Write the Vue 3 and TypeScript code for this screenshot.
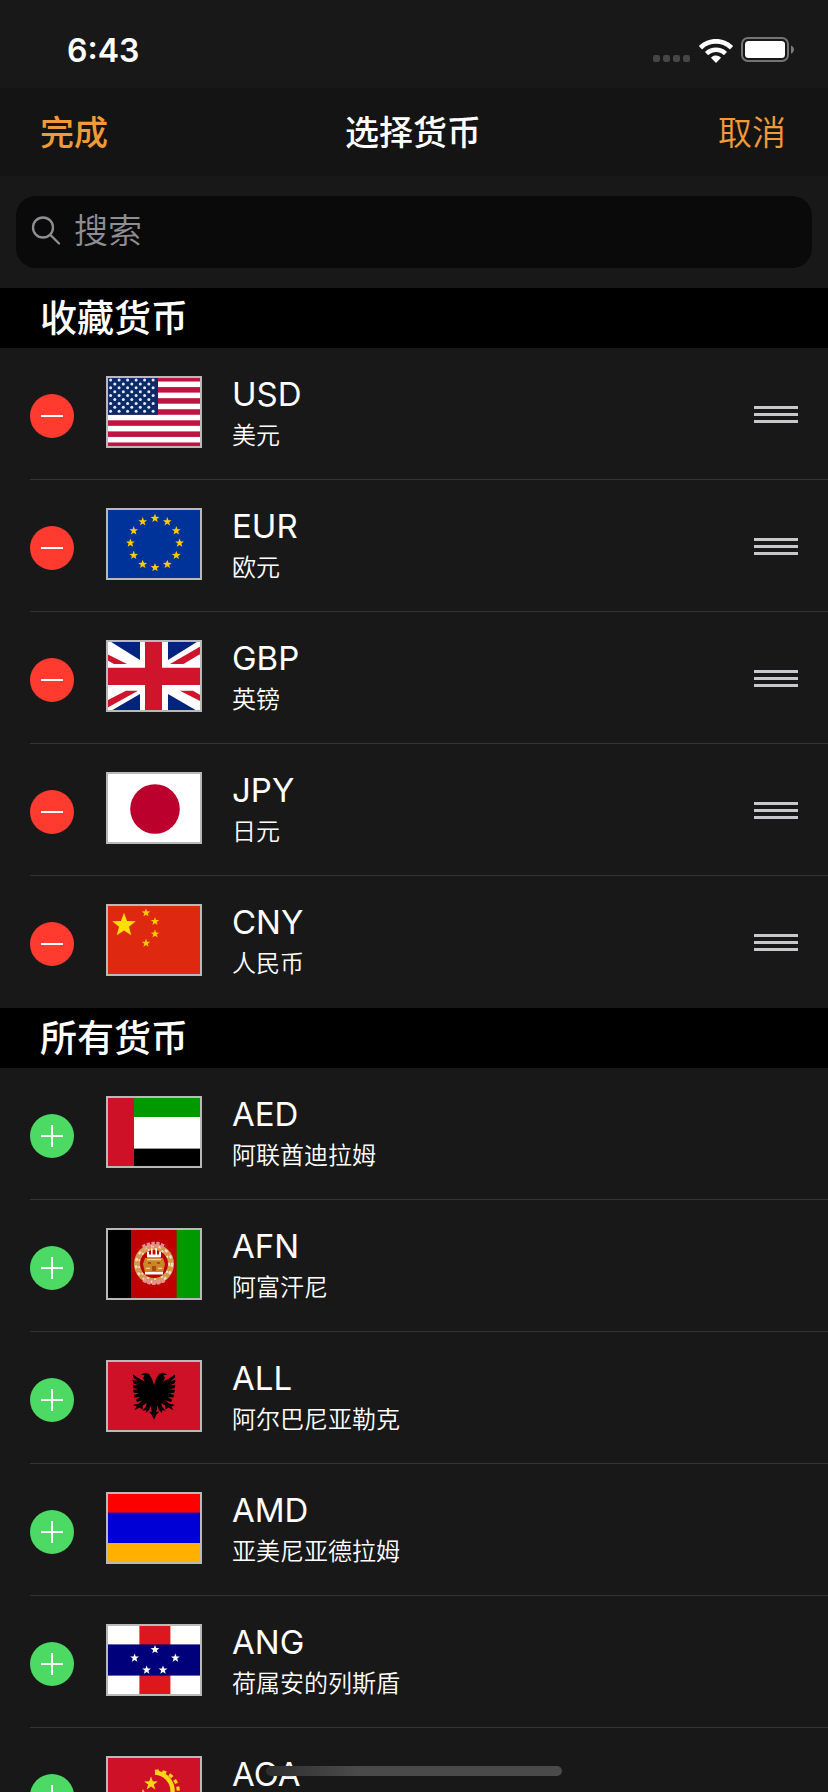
<script setup lang="ts">
import { computed, ref } from 'vue'

interface Currency {
  code: string
  name: string
}

interface Section {
  id: string
  title: string
  favorite: boolean
  items: Currency[]
}

const query = ref('')

const sections: Section[] = [
  {
    id: 'favorites',
    title: '收藏货币',
    favorite: true,
    items: [
      { code: 'USD', name: '美元' },
      { code: 'EUR', name: '欧元' },
      { code: 'GBP', name: '英镑' },
      { code: 'JPY', name: '日元' },
      { code: 'CNY', name: '人民币' },
    ],
  },
  {
    id: 'all',
    title: '所有货币',
    favorite: false,
    items: [
      { code: 'AED', name: '阿联酋迪拉姆' },
      { code: 'AFN', name: '阿富汗尼' },
      { code: 'ALL', name: '阿尔巴尼亚勒克' },
      { code: 'AMD', name: '亚美尼亚德拉姆' },
      { code: 'ANG', name: '荷属安的列斯盾' },
      { code: 'AOA', name: '安哥拉宽扎' },
    ],
  },
]

const visible = computed(() => {
  const q = query.value.trim().toLowerCase()
  return sections.map((s) => ({
    ...s,
    items: s.items.filter((c) => !q || c.code.toLowerCase().includes(q) || c.name.includes(q)),
  }))
})

/** Points of a five-pointed star around (cx, cy). */
function star(cx: number, cy: number, r: number): string {
  return Array.from({ length: 10 }, (_, i) => {
    const a = (Math.PI / 5) * i - Math.PI / 2
    const d = i % 2 ? r * 0.42 : r
    return `${(cx + d * Math.cos(a)).toFixed(2)},${(cy + d * Math.sin(a)).toFixed(2)}`
  }).join(' ')
}

const usStripes = [0, 2, 4, 6, 8, 10, 12]
const usStars = Array.from({ length: 9 }, (_, row) =>
  Array.from({ length: row % 2 ? 5 : 6 }, (_, col) => ({
    x: 2.3 + col * 4.25 + (row % 2 ? 2.1 : 0),
    y: 2 + row * 1.95,
  })),
).flat()
const euStars = Array.from({ length: 12 }, (_, i) => {
  const a = (Math.PI / 6) * i
  return star(24.5 + 12.3 * Math.sin(a), 17.5 - 12.3 * Math.cos(a), 2.3)
})
const cnStars = [star(20, 4.4, 2.2), star(24.5, 8.7, 2.2), star(24.5, 15, 2.2), star(20, 19.6, 2.2)]
const angStars = [star(24.5, 12.8, 2.3), star(14.3, 17, 2.3), star(34.7, 17, 2.3), star(20.3, 23, 2.3), star(28.5, 23, 2.3)]
</script>

<template>
  <div class="screen">
    <div class="status">
      <span class="time">6:43</span>
      <div class="indicators">
        <svg class="dots" width="38" height="8" viewBox="0 0 38 8" aria-hidden="true">
          <rect v-for="n in 4" :key="n" :x="(n - 1) * 10" y="0" width="7" height="7" rx="2.2" />
        </svg>
        <svg class="wifi" width="34" height="24" viewBox="0 0 34 24" aria-hidden="true">
          <path d="M17 0C10.600 0 4.700 2.500 .3 6.600a.7.7 0 0 0 0 1L2.600 9.900a.7.7 0 0 0 1 0A19.500 19.500 0 0 1 17 4.800c5.100 0 9.800 1.900 13.400 5.100a.7.7 0 0 0 1 0l2.300-2.300a.7.7 0 0 0 0-1C29.300 2.500 23.400 0 17 0z" />
          <path d="M17 8.400c-4.100 0-7.800 1.500-10.600 4.100a.7.7 0 0 0 0 1l2.300 2.300a.7.7 0 0 0 1 0A10.800 10.800 0 0 1 17 13.100c2.800 0 5.300 1 7.300 2.700a.7.7 0 0 0 1 0l2.300-2.300a.7.7 0 0 0 0-1A15.600 15.600 0 0 0 17 8.400z" />
          <path d="M17 16.600c-1.800 0-3.400.7-4.600 1.700a.7.7 0 0 0 0 1l4.100 4.200a.7.7 0 0 0 1 0l4.100-4.200a.7.7 0 0 0 0-1A7 7 0 0 0 17 16.600z" />
        </svg>
        <svg class="battery" width="54" height="26" viewBox="0 0 54 26" aria-hidden="true">
          <rect x="1" y="1" width="46" height="23" rx="6" fill="none" stroke="#747474" stroke-width="2" />
          <rect x="4" y="4" width="40" height="17" rx="3.500" fill="#fff" />
          <path d="M50 8.500c1.700.6 3 2.200 3 4.100s-1.300 3.500-3 4.100z" fill="#7c7c7c" />
        </svg>
      </div>
    </div>

    <header class="nav">
      <button type="button" class="action done">完成</button>
      <h1>选择货币</h1>
      <button type="button" class="action cancel">取消</button>
    </header>

    <div class="search-area">
      <label class="search">
        <svg width="30" height="30" viewBox="0 0 30 30" aria-hidden="true">
          <circle cx="12" cy="12.500" r="10" />
          <path d="M19.500 20 28 28.500" />
        </svg>
        <input v-model="query" type="text" placeholder="搜索" aria-label="搜索" />
      </label>
    </div>

    <main class="list">
      <section v-for="section in visible" :key="section.id">
        <h2>{{ section.title }}</h2>
        <ul>
          <li v-for="item in section.items" :key="item.code">
            <button
              type="button"
              class="toggle"
              :class="section.favorite ? 'remove' : 'add'"
              :aria-label="(section.favorite ? '移除 ' : '添加 ') + item.code"
            >
              <svg width="22" height="22" viewBox="0 0 22 22" aria-hidden="true">
                <path :d="section.favorite ? 'M0 11h22' : 'M0 11h22M11 0v22'" />
              </svg>
            </button>

            <svg class="flag" viewBox="0 0 48 36" aria-hidden="true">
              <g v-if="item.code === 'USD'">
                <rect width="48" height="36" fill="#fff" />
                <rect v-for="s in usStripes" :key="s" y="0" :transform="`translate(0 ${(s * 36) / 13})`" width="48" height="2.770" fill="#bf1440" />
                <rect width="26" height="19.400" fill="#0b2a66" />
                <circle v-for="(p, i) in usStars" :key="i" :cx="p.x" :cy="p.y" r="0.750" fill="#e6eaf2" />
              </g>
              <g v-else-if="item.code === 'EUR'">
                <rect width="48" height="36" fill="#039" />
                <polygon v-for="(p, i) in euStars" :key="i" :points="p" fill="#fc0" />
              </g>
              <g v-else-if="item.code === 'GBP'">
                <rect width="48" height="36" fill="#fff" />
                <path d="M1 0h16v10zM47 0H31v10zM17 27v9H1.500zM31 27v9h15.500z" fill="#00247d" />
                <path d="M0 6.800 10.500 12H4L0 9.800zM48 2.700V6.500L38.700 12H32zM16 25.400H10L0 30.500v3.700zM37 25.400h6.500L48 28v3z" fill="#cf142b" />
                <path d="M19.500 0h8.500v13.900h20v8.600H28V36h-8.500V22.500H0v-8.600h19.500z" fill="#cf142b" />
              </g>
              <g v-else-if="item.code === 'JPY'">
                <rect width="48" height="36" fill="#fff" />
                <circle cx="24.500" cy="18.500" r="12.400" fill="#bc002d" />
              </g>
              <g v-else-if="item.code === 'CNY'">
                <rect width="48" height="36" fill="#de2910" />
                <polygon :points="star(9, 10.6, 6.2)" fill="#ffde00" />
                <polygon v-for="(p, i) in cnStars" :key="i" :points="p" fill="#ffc800" />
              </g>
              <g v-else-if="item.code === 'AED'">
                <rect width="48" height="36" fill="#fff" />
                <rect width="48" height="10.500" fill="#009a00" />
                <rect y="26.300" width="48" height="9.700" fill="#000" />
                <rect width="14" height="36" fill="#ce1126" />
              </g>
              <g v-else-if="item.code === 'AFN'">
                <rect width="48" height="36" fill="#be0000" />
                <rect width="12.500" height="36" fill="#000" />
                <rect x="35.300" width="12.700" height="36" fill="#009a00" />
                <circle cx="24" cy="18" r="8.500" fill="none" stroke="#d29a4c" stroke-width="3" />
                <circle cx="24" cy="18" r="9" fill="none" stroke="#f2dcc2" stroke-width="1.200" stroke-dasharray="1.500 2.200" />
                <circle cx="24" cy="18" r="7.600" fill="none" stroke="#f7e6d8" stroke-width="0.800" stroke-dasharray="1 2.600" />
                <path d="M18.500 9.700a9.800 9.800 0 0 1 11 0M18.800 25.800a9.500 9.500 0 0 0 10.400 0" fill="none" stroke="#e58c94" stroke-width="2.300" stroke-dasharray="1.600 .7" />
                <path d="M19.500 15h9l1 3-1 4.500h-9l-1-4.500z" fill="#cf8427" />
                <path d="M20.500 14.800h7v-3h-1v1.500h-1v-3h-.8v3h-1.400v-3h-.8v3h-1v-1.500h-1zM19.500 22h9v1.300h-9z" fill="#fff" />
                <path d="M21 17h1.500v1H21zm4.500 0H27v1h-1.500zM23 19h2v2.500h-2z" fill="#a84b10" />
                <path d="M20.500 15.800h7M20 20.200h2m4 0h2" stroke="#f0cf9c" stroke-width="0.600" />
              </g>
              <g v-else-if="item.code === 'ALL'">
                <rect width="48" height="36" fill="#ce1126" />
                <path d="M24 12.500 23 9.500 21.500 7l-2-.6-2.200.8 2 .5-.8 1.300.9 1.700L17 9.500l-3.500-2.300v1.600l2.300 1.700-2.600-.6.400 1.700 2.600 1-2.800-.2.200 1.600 2.800.6-2.900.3.400 1.500 2.600.2-2.700.9.600 1.300 2.700-.3-2.300 1.400.9 1.100 2.500-.9-1.700 1.600-3 .8 1.800.8-1 1.800 2.400-1.300 1.600.9.100-1.900 2-1.300-.5 2-1.700 1.700 1.900-.1-.3 1.400 1.800-1.500.6-2.200.7 3.300-1.500-.3 1.500 1.700 1.100 2.400 1.100-2.400 1.500-1.700-1.500.3.700-3.300.6 2.200 1.800 1.500-.3-1.400 1.900.1-1.700-1.700-.5-2 2 1.300.1 1.900 1.600-.9 2.400 1.300-1-1.800 1.800-.8-3-.8-1.700-1.600 2.500.9.900-1.100-2.300-1.400 2.700.3.600-1.300-2.700-.9 2.600-.2.400-1.500-2.900-.3 2.800-.6.200-1.600-2.800.2 2.600-1 .4-1.700-2.600.6 2.300-1.700V7.200L31 9.500l-2.400 1.200.9-1.700-.8-1.300 2-.5-2.200-.8-2 .6L25 9.500z" fill="#000" />
              </g>
              <g v-else-if="item.code === 'AMD'">
                <rect width="48" height="36" fill="#0000d6" />
                <rect width="48" height="10.300" fill="#f00" />
                <rect y="25.500" width="48" height="10.500" fill="#ffb000" />
              </g>
              <g v-else-if="item.code === 'ANG'">
                <rect width="48" height="36" fill="#fff" />
                <rect x="16.700" width="15.500" height="36" fill="#dc171d" />
                <rect y="10.200" width="48" height="15.600" fill="#00007b" />
                <polygon v-for="(p, i) in angStars" :key="i" :points="p" fill="#fff" />
              </g>
              <g v-else-if="item.code === 'AOA'">
                <rect width="48" height="18" fill="#ce1126" />
                <rect y="18" width="48" height="18" fill="#000" />
                <path d="M24.500 8.300a9.300 9.300 0 1 1-1 18.600" fill="none" stroke="#f9d616" stroke-width="2.200" />
                <path d="M24.500 7.700a10.200 10.200 0 1 1-1 20" fill="none" stroke="#f9d616" stroke-width="1.600" stroke-dasharray="2 1.700" />
                <polygon :points="star(22.5, 13.8, 3.6)" fill="#f9d616" />
                <path d="M18.600 16.600c1.500 3.600 5.500 7 11.400 9.400l-1 1.800c-6-2.500-10-6.300-11-10.500z" fill="#f9d616" />
              </g>
              <rect x="0.500" y="0.500" width="47" height="35" fill="none" stroke="#b9b9b9" />
            </svg>

            <div class="label">
              <span class="code">{{ item.code }}</span>
              <span class="name">{{ item.name }}</span>
            </div>

            <button v-if="section.favorite" type="button" class="drag" :aria-label="'排序 ' + item.code">
              <i></i><i></i><i></i>
            </button>
          </li>
        </ul>
      </section>
    </main>

    <div class="home"></div>
  </div>
</template>

<style>
body {
  margin: 0;
  background: #181818;
}
</style>

<style scoped>
.screen {
  position: relative;
  display: flex;
  flex-direction: column;
  height: 100vh;
  overflow: hidden;
  background: #181818;
  color: #fff;
  font-family: Inter, 'Noto Sans CJK SC', sans-serif;
}

button {
  margin: 0;
  padding: 0;
  border: 0;
  background: none;
  color: inherit;
  font: inherit;
  cursor: pointer;
}

.status {
  flex: none;
  display: flex;
  align-items: center;
  justify-content: space-between;
  box-sizing: border-box;
  height: 88px;
  padding: 12px 33px 0 67px;
}

.time {
  padding-top: 2px;
  font-size: 32px;
  line-height: 40px;
  font-weight: 600;
}

.indicators {
  display: flex;
  align-items: flex-end;
  gap: 8px;
}

.dots {
  fill: #464646;
}

.wifi {
  fill: #fff;
}

.nav {
  flex: none;
  display: grid;
  grid-template-columns: 1fr auto 1fr;
  align-items: center;
  box-sizing: border-box;
  height: 88px;
  padding: 2px 42px 0 40px;
  background: #141414;
  font-size: 34px;
  line-height: 48px;
}

.nav h1 {
  margin: 0;
  font-size: 34px;
  line-height: 48px;
  font-weight: 500;
}

.action {
  color: #f19a37;
}

.done {
  justify-self: start;
  font-weight: 500;
}

.cancel {
  justify-self: end;
  font-weight: 350;
}

.search-area {
  flex: none;
  padding: 20px 16px;
}

.search {
  display: flex;
  align-items: center;
  gap: 13px;
  box-sizing: border-box;
  height: 72px;
  padding: 0 15px 4px;
  border-radius: 20px;
  background: #0a0a0a;
}

.search svg {
  flex: none;
  fill: none;
  stroke: #8e8e93;
  stroke-width: 2.3;
  stroke-linecap: round;
}

.search input {
  flex: 1;
  min-width: 0;
  height: 48px;
  padding: 0;
  border: 0;
  outline: none;
  background: none;
  color: #fff;
  font: inherit;
  font-size: 34px;
  font-weight: 350;
}

.search input::placeholder {
  color: #8e8e93;
  opacity: 1;
}

.list {
  flex: 1;
  min-height: 0;
  overflow-y: auto;
  scrollbar-width: none;
}

h2 {
  margin: 0;
  padding: 2px 40px 0;
  background: #000;
  font-size: 37px;
  line-height: 58px;
  font-weight: 500;
}

ul {
  margin: 0;
  padding: 0;
  list-style: none;
}

li {
  display: flex;
  align-items: center;
  box-sizing: border-box;
  height: 132px;
  margin-left: 30px;
  padding-right: 30px;
  border-bottom: 1px solid #333;
}

li:last-child {
  border-bottom-color: transparent;
}

.toggle {
  flex: none;
  display: grid;
  place-items: center;
  width: 44px;
  height: 44px;
  margin-top: 4px;
  border-radius: 50%;
}

.toggle svg {
  stroke: #fff;
  stroke-width: 2;
}

.remove {
  background: #ff3b30;
}

.add {
  background: #4cd964;
}

.flag {
  flex: none;
  width: 96px;
  height: 72px;
  margin: 0 30px 4px 32px;
}

.label {
  flex: 1;
  display: flex;
  flex-direction: column;
}

.code {
  font-size: 33px;
  line-height: 44px;
}

.name {
  font-size: 24px;
  line-height: 40px;
  font-weight: 350;
}

.drag {
  flex: none;
  display: flex;
  flex-direction: column;
  gap: 4px;
  width: 44px;
  margin-top: 2px;
  cursor: grab;
}

.drag i {
  height: 3px;
  background: #c7c7cc;
}

.home {
  position: absolute;
  bottom: 16px;
  left: 50%;
  width: 296px;
  height: 10px;
  margin-left: -148px;
  border-radius: 5px;
  background: linear-gradient(90deg, #2e2e2e, #4a4a4a 90px);
}
</style>
